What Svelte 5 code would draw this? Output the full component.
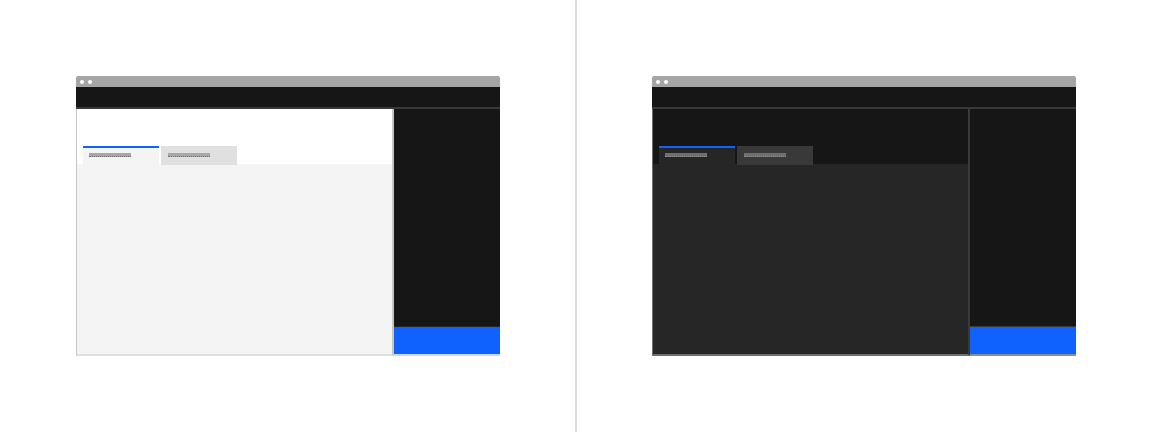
<script>
  const themes = ['light', 'dark'];
</script>

<div class="page">
  {#each themes as theme}
    <section class="panel {theme}">
      <div class="window">
        <div class="titlebar"><i></i><i></i></div>
        <div class="header"></div>
        <div class="body">
          <main class="main">
            <div class="tabs">
              <div class="tab active"><span class="label"></span></div>
              <div class="tab"><span class="label"></span></div>
            </div>
            <div class="content"></div>
          </main>
          <aside class="side">
            <div class="side-fill"></div>
            <div class="action"></div>
          </aside>
        </div>
      </div>
    </section>
  {/each}
</div>

<style>
  :global(body) { margin: 0; background: #fff; }
  .page { display: flex; width: 1152px; height: 432px; }
  .panel { width: 576px; height: 432px; box-sizing: border-box; padding: 76px 0 0 76px; }
  .panel.light { border-right: 1px solid #dcdcdc; }
  .panel.dark { border-left: 1px solid #dcdcdc; padding-left: 75px; }
  .window { width: 424px; height: 280px; display: flex; flex-direction: column; }
  .titlebar {
    height: 11px; background: #a5a5a5; border-radius: 2px 2px 0 0; box-sizing: border-box;
    display: flex; align-items: center; gap: 4px; padding-left: 3.5px;
  }
  .titlebar i { width: 4px; height: 4px; border-radius: 50%; background: #fff; }
  .header { height: 20px; background: #161616; border-bottom: 2px solid #393939; }
  .body { flex: 1; display: flex; min-height: 0; }
  .main {
    flex: 1; display: flex; flex-direction: column; justify-content: flex-end;
    border-left: 1px solid #c6c6c6; border-right: 2px solid #c6c6c6; border-bottom: 2px solid #e0e0e0;
    background: #fff;
  }
  .tabs { display: flex; gap: 2px; padding-left: 6px; height: 19px; margin-bottom: -1px; }
  .tab { width: 76px; height: 19px; box-sizing: border-box; background: #e0e0e0; padding: 7px 0 0 7px; position: relative; }
  .tab.active { background: #f4f4f4; border-top: 2px solid #0f62fe; padding: 5px 0 0 6px; height: 18px; }
  .label {
    display: block; width: 42px; height: 4px; background: #a8a8a8;
    border-bottom: 1px dotted #6f6f6f; box-sizing: border-box;
  }
  .content { height: 190px; background: #f4f4f4; }
  .side { width: 106px; display: flex; flex-direction: column; }
  .side-fill { flex: 1; background: #161616; }
  .action {
    height: 30px; box-sizing: border-box; background: #0f62fe;
    border-top: 1px solid #262626; border-bottom: 2px solid #c6d8f8;
  }

  .dark .main { background: #161616; border-left-color: #6f6f6f; border-right-color: #393939; border-bottom-color: #6f6f6f; }
  .dark .tab { background: #393939; }
  .dark .tab.active { background: #262626; }
  .dark .label { background: #6f6f6f; border-bottom-color: #8d8d8d; }
  .dark .content { background: #262626; }
  .dark .action { border-top-color: #393939; border-bottom-color: #8d8d8d; }
</style>
